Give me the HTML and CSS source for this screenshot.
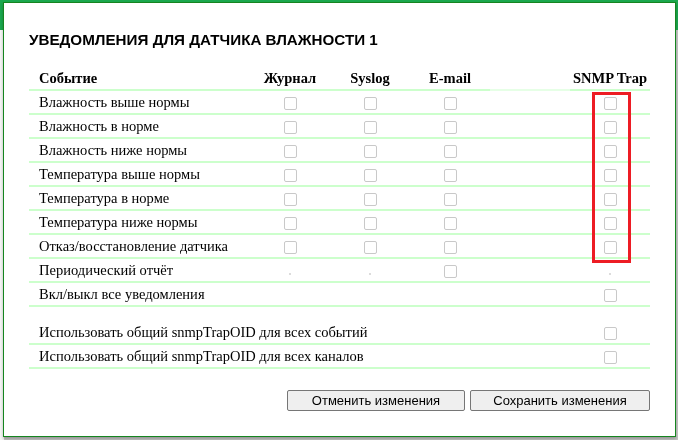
FILE: index.html
```html
<!DOCTYPE html>
<html>
<head>
    <meta charset="utf-8">
    <link rel="stylesheet" href="styles.css">
</head>
<body>
    <div class="topbar"></div>

    <div class="modal">
        <h2 class="modal-title">УВЕДОМЛЕНИЯ ДЛЯ ДАТЧИКА ВЛАЖНОСТИ 1</h2>

        <table class="notify-table">
            <thead>
                <tr>
                    <th class="ev">Событие</th>
                    <th>Журнал</th>
                    <th>Syslog</th>
                    <th>E-mail</th>
                    <th class="blank"></th>
                    <th>SNMP Trap</th>
                </tr>
            </thead>
            <tbody>
                <tr>
                    <td class="ev">Влажность выше нормы</td>
                    <td><input type="checkbox" disabled></td>
                    <td><input type="checkbox" disabled></td>
                    <td><input type="checkbox" disabled></td>
                    <td></td>
                    <td><input type="checkbox" disabled></td>
                </tr>
                <tr>
                    <td class="ev">Влажность в норме</td>
                    <td><input type="checkbox" disabled></td>
                    <td><input type="checkbox" disabled></td>
                    <td><input type="checkbox" disabled></td>
                    <td></td>
                    <td><input type="checkbox" disabled></td>
                </tr>
                <tr>
                    <td class="ev">Влажность ниже нормы</td>
                    <td><input type="checkbox" disabled></td>
                    <td><input type="checkbox" disabled></td>
                    <td><input type="checkbox" disabled></td>
                    <td></td>
                    <td><input type="checkbox" disabled></td>
                </tr>
                <tr>
                    <td class="ev">Температура выше нормы</td>
                    <td><input type="checkbox" disabled></td>
                    <td><input type="checkbox" disabled></td>
                    <td><input type="checkbox" disabled></td>
                    <td></td>
                    <td><input type="checkbox" disabled></td>
                </tr>
                <tr>
                    <td class="ev">Температура в норме</td>
                    <td><input type="checkbox" disabled></td>
                    <td><input type="checkbox" disabled></td>
                    <td><input type="checkbox" disabled></td>
                    <td></td>
                    <td><input type="checkbox" disabled></td>
                </tr>
                <tr>
                    <td class="ev">Температура ниже нормы</td>
                    <td><input type="checkbox" disabled></td>
                    <td><input type="checkbox" disabled></td>
                    <td><input type="checkbox" disabled></td>
                    <td></td>
                    <td><input type="checkbox" disabled></td>
                </tr>
                <tr>
                    <td class="ev">Отказ/восстановление датчика</td>
                    <td><input type="checkbox" disabled></td>
                    <td><input type="checkbox" disabled></td>
                    <td><input type="checkbox" disabled></td>
                    <td></td>
                    <td><input type="checkbox" disabled></td>
                </tr>
                <tr>
                    <td class="ev">Периодический отчёт</td>
                    <td><span class="dot"></span></td>
                    <td><span class="dot"></span></td>
                    <td><input type="checkbox" disabled></td>
                    <td></td>
                    <td><span class="dot"></span></td>
                </tr>
                <tr>
                    <td class="ev">Вкл/выкл все уведомления</td>
                    <td></td>
                    <td></td>
                    <td></td>
                    <td></td>
                    <td><input type="checkbox" disabled></td>
                </tr>
                <tr class="spacer">
                    <td colspan="6"></td>
                </tr>
                <tr>
                    <td class="ev" colspan="5">Использовать общий snmpTrapOID для всех событий</td>
                    <td><input type="checkbox" disabled></td>
                </tr>
                <tr>
                    <td class="ev" colspan="5">Использовать общий snmpTrapOID для всех каналов</td>
                    <td><input type="checkbox" disabled></td>
                </tr>
            </tbody>
        </table>

        <div class="actions">
            <button class="btn">Отменить изменения</button>
            <button class="btn">Сохранить изменения</button>
        </div>

        <div class="highlight"></div>
    </div>
</body>
</html>
```

FILE: styles.css
```css
html, body {
    margin: 0;
    height: 100%;
}
body {
    background: linear-gradient(to right, #f6f6f6 0, #f6f6f6 4px, #c6c6c6 4px);
    overflow: hidden;
}
.topbar {
    height: 30px;
    background-color: #1ba84e;
}
.modal {
    position: fixed;
    left: 3px;
    top: 2px;
    width: 621px;
    height: 433px;
    padding: 0 25px;
    background: #fff;
    border: 1px solid #15851f;
    box-shadow: 0 2px 3px rgba(0, 0, 0, 0.25);
}
.modal-title {
    margin: 27px 0 0;
    font-family: "Liberation Sans", Arial, sans-serif;
    font-size: 15.2px;
    font-weight: bold;
    color: #000;
    line-height: 20px;
}
.notify-table {
    width: 621px;
    margin-top: 17px;
    border-collapse: collapse;
    table-layout: fixed;
    font-family: "Liberation Serif", "Times New Roman", serif;
    font-size: 14.5px;
    color: #000;
}
.notify-table th,
.notify-table td {
    width: 80px;
    height: 22px;
    padding: 0;
    text-align: center;
    vertical-align: middle;
    border-bottom: 2px solid #ccffcc;
}
.notify-table th {
    height: 20px;
    font-weight: bold;
    vertical-align: bottom;
    padding-bottom: 2px;
}
.notify-table th.blank {
    border-bottom-color: #e6ffe6;
}
.notify-table .ev {
    width: 211px;
    padding-left: 10px;
    text-align: left;
}
.notify-table tr.spacer td {
    height: 14px;
    border-bottom: none;
}
.notify-table input[type="checkbox"] {
    appearance: none;
    -webkit-appearance: none;
    box-sizing: border-box;
    margin: 0;
    width: 13px;
    height: 13px;
    vertical-align: middle;
    background: #fff;
    border: 1px solid #c9c9c9;
    border-radius: 2px;
}
.dot {
    display: inline-block;
    width: 2px;
    height: 2px;
    margin-top: 4px;
    background: #dcdcdc;
}
.actions {
    display: flex;
    justify-content: flex-end;
    gap: 5px;
    margin-top: 21px;
}
.btn {
    height: 21px;
    padding: 0;
    font-family: "Liberation Sans", Arial, sans-serif;
    font-size: 13px;
    color: #000;
    background: #efefef;
    border: 1px solid #767676;
    border-radius: 2px;
}
.btn:first-child {
    width: 178px;
}
.btn:last-child {
    width: 180px;
}
.highlight {
    position: absolute;
    left: 588px;
    top: 89px;
    width: 33px;
    height: 165px;
    border: 3px solid #ed1c24;
}
```
